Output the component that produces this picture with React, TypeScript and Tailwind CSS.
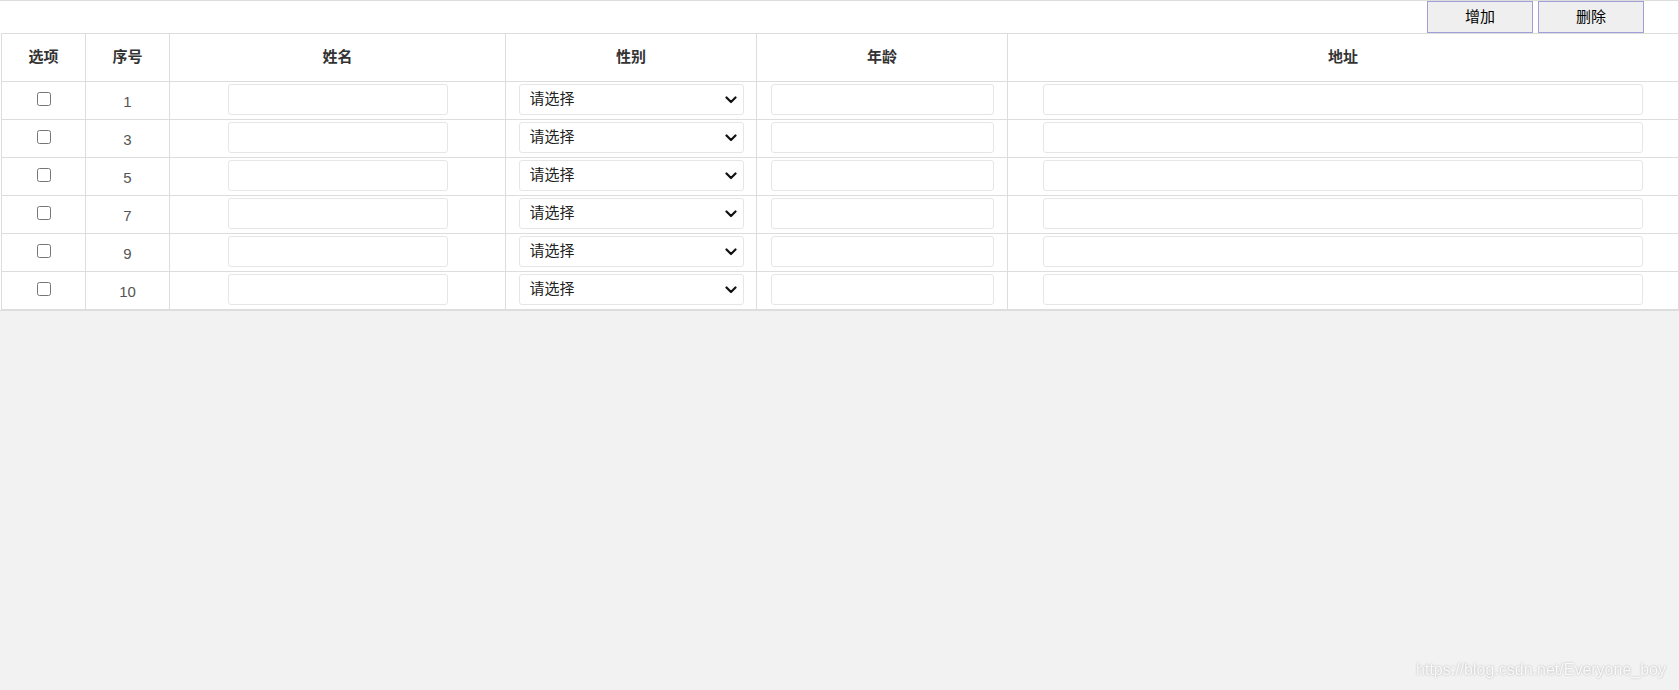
import { useState } from 'react';

type Row = {
  id: number;
  checked: boolean;
  name: string;
  sex: string;
  age: string;
  address: string;
};

const initialRows: Row[] = [1, 3, 5, 7, 9, 10].map((id) => ({
  id,
  checked: false,
  name: '',
  sex: '',
  age: '',
  address: '',
}));

const font = "font-['Liberation_Sans','Noto_Sans_CJK_SC',sans-serif]";

function Chevron() {
  return (
    <svg
      className="pointer-events-none absolute right-[7px] top-1/2 -translate-y-1/2"
      width="12"
      height="8"
      viewBox="0 0 12 8"
      fill="none"
    >
      <path d="M1.5 1.5 L6 6 L10.5 1.5" stroke="#111" strokeWidth="2.2" strokeLinecap="round" strokeLinejoin="round" />
    </svg>
  );
}

export default function App() {
  const [rows, setRows] = useState<Row[]>(initialRows);

  const update = (id: number, patch: Partial<Row>) => {
    setRows((prev) => prev.map((r) => (r.id === id ? { ...r, ...patch } : r)));
  };

  const handleAdd = () => {
    const next = rows.length ? rows[rows.length - 1].id + 1 : 1;
    setRows([...rows, { id: next, checked: false, name: '', sex: '', age: '', address: '' }]);
  };

  const handleDelete = () => {
    setRows(rows.filter((r) => !r.checked));
  };

  const th = 'border border-[#dddddd] h-[48px] p-0 text-center align-middle font-bold text-[15px] text-[#333]';
  const td = 'border border-[#dddddd] h-[38px] p-0 text-center align-middle';
  const field =
    'block mx-auto h-[31px] -translate-y-px rounded-[3px] border border-[#e6e6e6] bg-white px-[10px] text-[15px] text-[#222] outline-none';

  return (
    <div className={`min-h-screen bg-[#f2f2f2] ${font}`}>
      {/* Table panel */}
      <div className="bg-white border-t border-r border-b border-[#dddddd]">
        {/* Toolbar */}
        <div className="flex h-[32px] justify-end gap-[5px] pr-[34px]">
          <button
            onClick={handleAdd}
            className="w-[106px] h-[32px] border border-[#a09fd8] bg-[#efefef] text-[15px] text-black cursor-pointer"
          >
            增加
          </button>
          <button
            onClick={handleDelete}
            className="w-[106px] h-[32px] border border-[#a09fd8] bg-[#efefef] text-[15px] text-black cursor-pointer"
          >
            删除
          </button>
        </div>

        <table className="ml-px w-[calc(100%-1px)] table-fixed border-collapse [&_tr>*:last-child]:border-r-0 [&_tr:last-child>td]:border-b">
          <colgroup>
            <col className="w-[84px]" />
            <col className="w-[84px]" />
            <col className="w-[336px]" />
            <col className="w-[251px]" />
            <col className="w-[251px]" />
            <col />
          </colgroup>
          <thead>
            <tr>
              <th className={th}>选项</th>
              <th className={th}>序号</th>
              <th className={th}>姓名</th>
              <th className={th}>性别</th>
              <th className={th}>年龄</th>
              <th className={th}>地址</th>
            </tr>
          </thead>
          <tbody>
            {rows.map((r) => (
              <tr key={r.id}>
                <td className={td}>
                  <input
                    type="checkbox"
                    checked={r.checked}
                    onChange={(e) => update(r.id, { checked: e.target.checked })}
                    className="w-[14px] h-[14px] align-middle -translate-y-[2px]"
                  />
                </td>
                <td className={`${td} pt-[3px] text-[15px] text-[#555]`}>{r.id}</td>
                <td className={td}>
                  <input
                    value={r.name}
                    onChange={(e) => update(r.id, { name: e.target.value })}
                    className={`${field} w-[220px]`}
                  />
                </td>
                <td className={td}>
                  <div className="relative mx-auto w-[225px] -translate-y-px">
                    <select
                      value={r.sex}
                      onChange={(e) => update(r.id, { sex: e.target.value })}
                      className="block h-[31px] w-full appearance-none rounded-[3px] border border-[#e6e6e6] bg-white pl-[10px] pr-[24px] text-left text-[15px] text-[#222] outline-none"
                    >
                      <option value="">请选择</option>
                      <option value="male">男</option>
                      <option value="female">女</option>
                    </select>
                    <Chevron />
                  </div>
                </td>
                <td className={td}>
                  <input
                    value={r.age}
                    onChange={(e) => update(r.id, { age: e.target.value })}
                    className={`${field} w-[223px]`}
                  />
                </td>
                <td className={td}>
                  <input
                    value={r.address}
                    onChange={(e) => update(r.id, { address: e.target.value })}
                    className={`${field} w-[600px]`}
                  />
                </td>
              </tr>
            ))}
          </tbody>
        </table>
      </div>

      {/* Watermark */}
      <div className="fixed right-[13px] bottom-[8px] text-[16px] text-[#fafafa] font-['Liberation_Sans',sans-serif] [text-shadow:0_0_2px_#a8a8a8] select-none">
        https://blog.csdn.net/Everyone_boy
      </div>
    </div>
  );
}
